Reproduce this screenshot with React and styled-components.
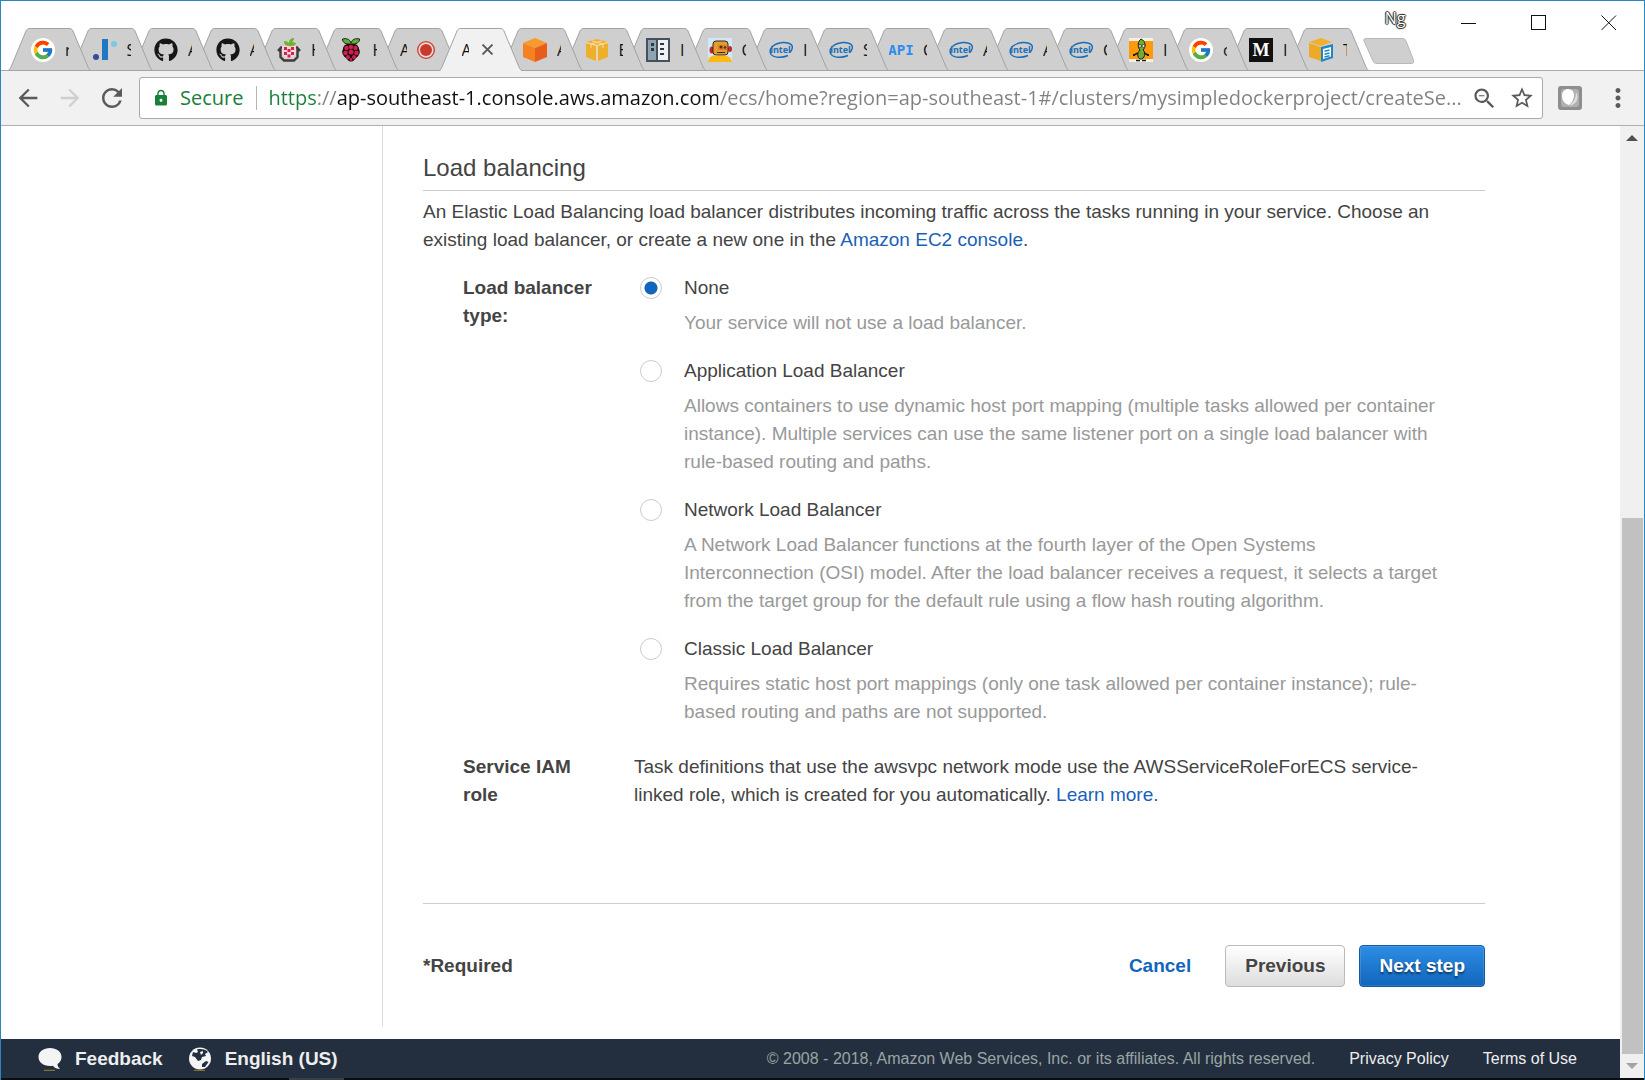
import React from "react";
import styled, { createGlobalStyle, css } from "styled-components";
import { FaGithub } from "react-icons/fa";
import { FcGoogle } from "react-icons/fc";
import {
  MdArrowBack,
  MdArrowForward,
  MdRefresh,
  MdLock,
  MdZoomOut,
  MdStarBorder,
  MdMoreVert,
} from "react-icons/md";

const uiFont = '"Open Sans", "Noto Sans", sans-serif';
const pageFont = '"Liberation Sans", Arial, sans-serif';

const GlobalStyle = createGlobalStyle`
  *, *::before, *::after { box-sizing: border-box; }
  body { margin: 0; background: #fff; font-family: ${pageFont}; }
  button { font: inherit; border: 0; padding: 0; background: none; cursor: pointer; }
  svg { display: block; }
`;

/* ---------- window ---------- */

const Window = styled.div`
  display: flex;
  flex-direction: column;
  min-height: 100vh;
  border: 1px solid #2a86c0;
  border-bottom: 0;
  background: #fff;
`;

const TitleBar = styled.header`
  display: flex;
  height: 70px;
  border-bottom: 1px solid #aaa;
`;

const TabStrip = styled.div`
  flex: 1 1 0;
  min-width: 0;
  display: flex;
  align-items: flex-end;
  padding-left: 7px;
`;

const TabGroup = styled.div`
  flex: none;
  display: flex;
  width: ${(p) => p.$width}px;
  height: 43px;
  margin-bottom: -1px;
`;

const TabButton = styled.button`
  position: relative;
  z-index: ${(p) => p.$z};
  flex: 1 1 0;
  min-width: 0;
  height: 43px;
  padding-left: 23px;
  display: flex;
  align-items: center;
  gap: 10px;
`;

const TabShape = styled.svg`
  position: absolute;
  left: 0;
  top: 0;
  z-index: -1;
`;

const TabTitle = styled.span`
  flex: none;
  width: ${(p) => (p.$first ? 7 : 4)}px;
  overflow: hidden;
  white-space: nowrap;
  text-align: left;
  font: 16px/24px ${uiFont};
  color: #111;
`;

const TabIcon = styled.span`
  flex: none;
  width: 24px;
  height: 24px;
`;

const NewTab = styled.button`
  flex: none;
  margin: 0 0 6px 17px;
`;

const WindowControls = styled.div`
  flex: none;
  display: flex;
  align-items: flex-start;
`;

const Profile = styled.button`
  width: 44px;
  height: 34px;
  margin-right: 17px;
  font: 16px/34px ${uiFont};
  color: #fff;
  text-shadow: 1px 0 1px #222, -1px 0 1px #222, 0 1px 1px #222, 0 -1px 1px #222;
`;

const ControlButton = styled.button`
  width: 70px;
  height: 43px;
  display: flex;
  align-items: center;
  justify-content: center;
`;

/* ---------- toolbar ---------- */

const Toolbar = styled.div`
  display: flex;
  align-items: center;
  height: 55px;
  padding: 0 5px 0 12px;
  background: #f1f1f1;
  border-bottom: 1px solid #b0b0b0;
`;

const ToolButton = styled.button`
  flex: none;
  display: flex;
  align-items: center;
  justify-content: center;
  width: ${(p) => p.$width || 30}px;
  height: 40px;
  color: ${(p) => (p.$dim ? "#cfcfcf" : "#5a5a5a")};
`;

const NavButtons = styled.nav`
  display: flex;
  gap: 12px;
  margin-right: 12px;
`;

const Omnibox = styled.div`
  flex: 1;
  min-width: 0;
  display: flex;
  align-items: center;
  height: 42px;
  padding: 0 2px 0 12px;
  border: 1px solid #a9a9a9;
  border-radius: 3px;
  background: #fff;
`;

const Secure = styled.span`
  display: flex;
  align-items: center;
  gap: 10px;
  padding-right: 13px;
  margin-right: 11px;
  border-right: 1px solid #b5b5b5;
  font: 20px/24px ${uiFont};
  color: #188038;
`;

const Address = styled.input`
  flex: 1;
  min-width: 0;
  height: 32px;
  padding: 0;
  border: 0;
  outline: 0;
  font: 20px/32px ${uiFont};
  color: transparent;
  text-overflow: ellipsis;
  background: linear-gradient(
    90deg,
    #188038 49px,
    #808080 49px 69px,
    #111 69px 450px,
    #808080 450px
  );
  background-clip: text;
  -webkit-background-clip: text;
`;

/* ---------- page ---------- */

const Viewport = styled.div`
  flex: 1;
  display: flex;
`;

const Page = styled.div`
  flex: 1;
  min-width: 0;
  display: flex;
  flex-direction: column;
`;

const Columns = styled.div`
  flex: 1;
  display: flex;
  padding-bottom: 12px;
`;

const Sidebar = styled.aside`
  flex: none;
  width: 382px;
  border-right: 1px solid #ddd;
`;

const Main = styled.main`
  flex: 1;
  min-width: 0;
  padding: 22px 135px 0 40px;
  font-size: 19px;
  line-height: 28px;
  color: #444;
`;

const Heading = styled.h2`
  margin: 0 0 7px;
  padding-bottom: 2px;
  border-bottom: 1px solid #ccc;
  font-size: 24px;
  line-height: 40px;
  font-weight: 400;
`;

const Intro = styled.p`
  margin: 0 0 20px;
`;

const Link = styled.a`
  color: #1a5fb8;
  text-decoration: none;
`;

const Field = styled.div`
  display: flex;
  padding: 0 32px 0 40px;
  margin-bottom: 27px;
`;

const FieldLabel = styled.div`
  flex: none;
  width: 171px;
  padding-right: 32px;
  font-weight: 700;
`;

const Options = styled.div`
  flex: 1;
  display: flex;
  flex-direction: column;
  gap: 20px;
  padding: 0 12px 0 6px;
`;

const Option = styled.div`
  display: grid;
  grid-template-columns: 22px 1fr;
  column-gap: 22px;
  row-gap: 7px;
  align-items: center;
`;

const Radio = styled.input`
  appearance: none;
  width: 22px;
  height: 22px;
  margin: 0;
  border: 1px solid #ccc;
  border-radius: 50%;
  background: #fff;
  &:checked {
    background: radial-gradient(circle, #1166bb 6px, #fff 7px);
  }
`;

const Hint = styled.p`
  grid-column: 2;
  margin: 0;
  color: #999;
`;

const Actions = styled.div`
  display: flex;
  align-items: center;
  gap: 14px;
  margin-top: 94px;
  padding: 41px 0 39px;
  border-top: 1px solid #ccc;
  font-weight: 700;
`;

const Required = styled.span`
  flex: 1;
`;

const CancelButton = styled.button`
  margin-right: 20px;
  color: #1166bb;
`;

const ActionButton = styled.button`
  height: 42px;
  padding: 0 19px;
  border: 1px solid #bbb;
  border-radius: 4px;
  color: #444;
  background: linear-gradient(#fff, #ddd);
  ${(p) =>
    p.$primary &&
    css`
      border-color: #1459a3;
      color: #fff;
      background: linear-gradient(#2e8de5, #1166bb);
      box-shadow: inset 0 0 0 1px rgba(255, 255, 255, 0.12);
      text-shadow: 0 2px 2px rgba(0, 0, 0, 0.5);
    `}
`;

/* ---------- console footer ---------- */

const Footer = styled.footer`
  display: flex;
  align-items: center;
  height: 39px;
  padding: 0 43px 0 37px;
  background: #232f3e;
  color: #eee;
`;

const FooterButton = styled.button`
  display: flex;
  align-items: center;
  gap: 13px;
  margin-right: 25px;
  font-size: 19px;
  line-height: 28px;
  font-weight: 700;
  color: #eee;
`;

const Legal = styled.div`
  display: flex;
  gap: 34px;
  margin-left: auto;
  font-size: 16px;
  line-height: 28px;
  color: #9aa5a5;
`;

const LegalLink = styled.a`
  color: #eee;
  text-decoration: none;
`;

const BottomEdge = styled.div`
  height: 2px;
  background: linear-gradient(90deg, #0a0e13 288px, #3a3f45 288px 343px, #0a0e13 343px);
`;

/* ---------- scroll bar ---------- */

const ScrollBar = styled.div`
  flex: none;
  width: 24px;
  display: flex;
  flex-direction: column;
  background: #f0f0f0;
`;

const ScrollArrow = styled.button`
  height: 24px;
  display: flex;
  align-items: center;
  justify-content: center;
`;

const ScrollSpace = styled.div`
  flex: 368;
`;

const ScrollThumb = styled.div`
  flex: 537;
  margin: 0 1px 0 2px;
  background: #c1c1c1;
`;

/* ---------- favicons ---------- */

const Icon = ({ children }) => (
  <svg width="24" height="24" viewBox="0 0 24 24" aria-hidden="true">
    {children}
  </svg>
);

const GoogleIcon = () => (
  <Icon>
    <circle cx="12" cy="12" r="12" fill="#fff" />
    <FcGoogle x="1" y="1" size={22} />
  </Icon>
);

const DotsIcon = () => (
  <Icon>
    <rect x="9" y="1" width="6" height="21" fill="#1f78c1" />
    <circle cx="3" cy="19" r="3" fill="#3a4a9a" />
    <circle cx="21" cy="6" r="3" fill="#7cc8e4" />
  </Icon>
);

const GitHubIcon = () => <FaGithub size={24} color="#161616" />;

const BerryHomeIcon = () => (
  <Icon>
    <path d="M1 13 L4 9.500 H20 L23 13 M3.500 11 V19 L7 22.500 H17 L20.500 19 V11" fill="none" stroke="#3c3c3c" strokeWidth="2.400" />
    <path d="M5 8 H19 V16 L15 20 H9 L5 16 Z" fill="#f4d3dc" />
    <path d="M7 9h3v3H7zM14 9h3v3h-3zM10.5 11h3v3h-3zM7 14h3v3H7zM14 14h3v3h-3zM10.5 16.500h3v3h-3z" fill="#cf2450" />
    <path d="M12 8 C7 8 7 4 7 3 C10 3 11 4 12 5 C12 2 14 0 17 0 C17 2 16 3 15 4 C18 4 19 5 19 6 C17 8 14 8.500 12 8 Z" fill="#6fb52c" />
  </Icon>
);

const RaspberryIcon = () => (
  <Icon>
    <path d="M12 6 C7 7 3 4 3.500 1 C7 0 11 1 12 5 C13 1 17 0 20.500 1 C21 4 17 7 12 6 Z" fill="#5fae3a" stroke="#17210f" />
    <path d="M12 6 C17 5 20 8 20 11 C22 14 20 18 17 20 C15 23 13 23.500 12 23.500 C11 23.500 9 23 7 20 C4 18 2 14 4 11 C4 8 7 5 12 6 Z" fill="#1c0a10" />
    <g fill="#cf1f4e">
      <circle cx="12" cy="9" r="2.200" />
      <circle cx="7.500" cy="10" r="2.200" />
      <circle cx="16.500" cy="10" r="2.200" />
      <circle cx="12" cy="14" r="2.500" />
      <circle cx="6.500" cy="15" r="2.300" />
      <circle cx="17.500" cy="15" r="2.300" />
      <circle cx="9" cy="19" r="2" />
      <circle cx="15" cy="19" r="2" />
      <circle cx="12" cy="21.500" r="1.400" />
    </g>
  </Icon>
);

const RecordIcon = () => (
  <svg width="18" height="18" viewBox="0 0 18 18" aria-hidden="true">
    <circle cx="9" cy="9" r="8.300" fill="#e7dcda" stroke="#c93a2c" strokeWidth="1.300" />
    <circle cx="9" cy="9" r="6" fill="#c93a2c" />
  </svg>
);

const CloseIcon = () => (
  <svg width="17" height="11" viewBox="-3 0 17 11" aria-hidden="true">
    <path d="M0.500 0.500 L10.500 10.500 M10.500 0.500 L0.500 10.500" stroke="#5a5a5a" strokeWidth="1.800" />
  </svg>
);

const OrangeCubeIcon = () => (
  <Icon>
    <path d="M12 0 L24 5 L12 10 L0 5 Z" fill="#fa9a2d" />
    <path d="M0 5 L12 10 V24 L0 19 Z" fill="#f58220" />
    <path d="M24 5 L12 10 V24 L24 19 Z" fill="#e85d1c" />
  </Icon>
);

const YellowBoxIcon = () => (
  <Icon>
    <path d="M1 4 L12 1 L23 4 L12 7 Z" fill="#f0b02c" />
    <path d="M1 5 L11 8 V23 L1 19 Z M23 5 L13 8 V23 L23 19 Z" fill="#eeb02b" />
    <path d="M1 4.500 L12 7.500 L23 4.500 M12 7.500 V23 M7 3 L18 6 V10 M17 3 L6 6 V10" fill="none" stroke="#f8dc9b" />
  </Icon>
);

const ServerIcon = () => (
  <Icon>
    <rect width="24" height="24" fill="#46515b" />
    <rect x="2" y="2" width="8" height="20" fill="#8fa4b3" />
    <rect x="12" y="2" width="10" height="20" fill="#eef2f4" />
    <path d="M5 5h3v3H5zM5 10h3v3H5zM14 5h4v2h-4zM14 10h4v2h-4zM14 15h4v2h-4z" fill="#2e3840" />
  </Icon>
);

const RobotIcon = () => (
  <Icon>
    <rect width="24" height="24" rx="1" fill="#cfe8f5" />
    <ellipse cx="4" cy="12" rx="2.500" ry="3.500" fill="#c3272b" />
    <ellipse cx="22" cy="11" rx="2" ry="3" fill="#c3272b" />
    <rect x="5" y="3" width="15" height="14" rx="3" fill="#e79a2d" stroke="#3a2a18" />
    <path d="M0 24 C1 17 6 17 12 18 C18 17 23 18 24 24 Z" fill="#fcb813" />
    <path d="M10 7h9v5h-9z" fill="#d5842c" />
    <circle cx="13" cy="9" r="1.500" fill="#5a2a18" />
    <circle cx="17" cy="9.500" r="1.200" fill="#5a2a18" />
    <path d="M9 14.500h8" stroke="#3a2a18" />
  </Icon>
);

const IntelIcon = () => (
  <Icon>
    <path
      d="M2 16 C-1 11 5 5 14 4.500 C21 4.200 24.500 7 23 11 C22.500 12.500 22 13.500 21 14.500 M1 14 C2 20 12 20.500 19 17.500"
      fill="none"
      stroke="#1a6db5"
      strokeWidth="1.400"
    />
    <text x="11.500" y="15" textAnchor="middle" fontFamily="Open Sans, sans-serif" fontSize="9" fontWeight="700" fill="#1a6db5">
      intel
    </text>
  </Icon>
);

const ApiIcon = () => (
  <Icon>
    <text x="12" y="17" textAnchor="middle" fontFamily="DejaVu Sans Mono, monospace" fontSize="14" fontWeight="700" fill="#2a8df0">
      API
    </text>
  </Icon>
);

const PeaIcon = () => (
  <Icon>
    <rect width="24" height="24" fill="#f6f1e6" />
    <rect y="3" width="24" height="18" fill="#ff9a0a" />
    <path d="M12 1 C17 3 17 9 14 12 C17 14 16 19 13 21 H11 C8 19 8 15 11 12 C8 9 9 3 12 1 Z" fill="#6fae34" stroke="#1b1b10" />
    <circle cx="11" cy="8" r="1.500" fill="#e8f0dc" stroke="#222" strokeWidth="0.700" />
    <circle cx="14.500" cy="8" r="1.500" fill="#e8f0dc" stroke="#222" strokeWidth="0.700" />
    <path d="M9 15 L5 17 M15 15 L19 17 M7 22.500 h4 M13 22.500 h4" stroke="#1b1b10" strokeWidth="1.500" />
    <path d="M4 17 h2 M18 17 h2" stroke="#1b1b10" strokeWidth="2" />
  </Icon>
);

const MediumIcon = () => (
  <Icon>
    <rect width="24" height="24" fill="#111" />
    <text x="12" y="18" textAnchor="middle" fontFamily="Liberation Serif, serif" fontSize="18" fontWeight="700" fill="#fff">
      M
    </text>
  </Icon>
);

const BoxDocIcon = () => (
  <Icon>
    <path d="M0 4 L12 0 L23 4 L12 8 Z" fill="#f0b02c" />
    <path d="M0 5 L12 9 V23 L0 19 Z" fill="#eda927" />
    <path d="M12 9 L24 6 V20 L12 24 Z" fill="#1e86c4" />
    <path d="M14 11 L22 9 V18.500 L14 21 Z" fill="#fff" />
    <path d="M15.500 13.300 L20.500 12 M15.500 16.300 L20.500 15 M15.500 19 L20.500 17.700" stroke="#1e86c4" strokeWidth="1.500" />
  </Icon>
);

const BubbleIcon = () => (
  <svg width="24" height="24" viewBox="0 0 24 24" aria-hidden="true">
    <path d="M12 1 C18.500 1 23.500 4.500 23.500 10 C23.500 13 22 15.500 19.500 17 C19.500 19 20.500 20.500 22 22 C19 22 16.500 21 15 18.800 C6 20 0.500 15.500 0.500 10 C0.500 4.500 5.500 1 12 1 Z" fill="#f4f4f4" />
    <path d="M6 23.300 h11" stroke="#a87a2c" />
  </svg>
);

const GlobeIcon = () => (
  <svg width="24" height="24" viewBox="0 0 24 24" aria-hidden="true">
    <circle cx="12" cy="11.500" r="11" fill="#f4f4f4" />
    <path d="M9 2.500 C13 1.500 18 2.500 20 5 L17 7 L18 9 L14 10 L13 13 L10 14 L7 10 L4 9 L5 5 L8 6 L10 5 Z M14 17 L18 14 L20.500 15 L17 20 L14 20 Z" fill="#232f3e" />
    <path d="M12 5 L15 4 L15 6 L13 8 Z" fill="#f4f4f4" />
    <path d="M6 23.300 h11" stroke="#a87a2c" />
  </svg>
);

/* ---------- data ---------- */

const wideTabs = [
  { title: "r", icon: GoogleIcon },
  { title: "S", icon: DotsIcon },
  { title: "A", icon: GitHubIcon },
  { title: "A", icon: GitHubIcon },
  { title: "H", icon: BerryHomeIcon },
  { title: "H", icon: RaspberryIcon },
  { title: "A", icon: RecordIcon, titleFirst: true },
  { title: "A", icon: CloseIcon, titleFirst: true, active: true },
  { title: "A", icon: OrangeCubeIcon },
  { title: "E", icon: YellowBoxIcon },
  { title: "I", icon: ServerIcon },
  { title: "C", icon: RobotIcon },
];

const narrowTabs = [
  { title: "I", icon: IntelIcon },
  { title: "S", icon: IntelIcon },
  { title: "C", icon: ApiIcon },
  { title: "A", icon: IntelIcon },
  { title: "A", icon: IntelIcon },
  { title: "C", icon: IntelIcon },
  { title: "I", icon: PeaIcon },
  { title: "c", icon: GoogleIcon },
  { title: "I", icon: MediumIcon },
  { title: "T", icon: BoxDocIcon },
];

const options = [
  {
    id: "none",
    name: "None",
    hint: "Your service will not use a load balancer.",
  },
  {
    id: "application",
    name: "Application Load Balancer",
    hint: "Allows containers to use dynamic host port mapping (multiple tasks allowed per container instance). Multiple services can use the same listener port on a single load balancer with rule-based routing and paths.",
  },
  {
    id: "network",
    name: "Network Load Balancer",
    hint: "A Network Load Balancer functions at the fourth layer of the Open Systems Interconnection (OSI) model. After the load balancer receives a request, it selects a target from the target group for the default rule using a flow hash routing algorithm.",
  },
  {
    id: "classic",
    name: "Classic Load Balancer",
    hint: "Requires static host port mappings (only one task allowed per container instance); rule-based routing and paths are not supported.",
  },
];

function Tab({ tab, z }) {
  const Favicon = tab.icon;
  const title = <TabTitle $first={tab.titleFirst}>{tab.title}</TabTitle>;
  return (
    <TabButton role="tab" aria-selected={!!tab.active} $z={tab.active ? 50 : z}>
      <TabShape width="84" height="43" viewBox="0 0 84 43" aria-hidden="true">
        <path
          d="M0 42.500 C1.500 42 2 41 3 39 L18 3 C19 1 20 0.500 22 0.500 H61 C63 0.500 64 1 65 3 L80 39 C81 41 81.500 42 83 42.500"
          fill={tab.active ? "#f1f1f1" : "#cfcfcf"}
          stroke="#a3a3a3"
        />
        {tab.active && <path d="M2 42.500 H82" stroke="#f1f1f1" />}
        {!tab.active && <path d="M0 42.500 H84" stroke="#a3a3a3" />}
      </TabShape>
      {tab.titleFirst ? (
        <>
          {title}
          <Favicon />
        </>
      ) : (
        <>
          <TabIcon>
            <Favicon />
          </TabIcon>
          {title}
        </>
      )}
    </TabButton>
  );
}

export default function App() {
  return (
    <>
      <GlobalStyle />
      <Window>
        <TitleBar>
          <TabStrip role="tablist">
            <TabGroup $width={738}>
              {wideTabs.map((tab, i) => (
                <Tab key={i} tab={tab} z={40 - i} />
              ))}
            </TabGroup>
            <TabGroup $width={600}>
              {narrowTabs.map((tab, i) => (
                <Tab key={i} tab={tab} z={20 - i} />
              ))}
            </TabGroup>
            <NewTab aria-label="New tab">
              <svg width="52" height="26" viewBox="0 0 52 26" aria-hidden="true">
                <path d="M3 0.500 H40 Q42 0.500 43 3 L50.500 22 Q51.500 25 49 25.500 H14 Q11 25.500 10 23 L1 3 Q0 0.500 3 0.500 Z" fill="#cfcfcf" stroke="#b8b8b8" />
              </svg>
            </NewTab>
          </TabStrip>
          <WindowControls>
            <Profile>Ng</Profile>
            <ControlButton aria-label="Minimize">
              <svg width="16" height="16" viewBox="0 0 16 16">
                <path d="M0 8.500 H15" stroke="#111" />
              </svg>
            </ControlButton>
            <ControlButton aria-label="Maximize">
              <svg width="16" height="16" viewBox="0 0 16 16">
                <rect x="0.500" y="0.500" width="14" height="14" fill="none" stroke="#111" />
              </svg>
            </ControlButton>
            <ControlButton aria-label="Close">
              <svg width="16" height="16" viewBox="0 0 16 16">
                <path d="M0.500 0.500 L15 15 M15 0.500 L0.500 15" stroke="#111" />
              </svg>
            </ControlButton>
          </WindowControls>
        </TitleBar>

        <Toolbar>
          <NavButtons>
            <ToolButton aria-label="Back">
              <MdArrowBack size={28} />
            </ToolButton>
            <ToolButton aria-label="Forward" $dim>
              <MdArrowForward size={28} />
            </ToolButton>
            <ToolButton aria-label="Reload">
              <MdRefresh size={30} />
            </ToolButton>
          </NavButtons>
          <Omnibox>
            <Secure>
              <MdLock size={18} />
              Secure
            </Secure>
            <Address
              aria-label="Address"
              defaultValue="https://ap-southeast-1.console.aws.amazon.com/ecs/home?region=ap-southeast-1#/clusters/mysimpledockerproject/createSe..."
            />
            <ToolButton aria-label="Zoom" $width={37}>
              <MdZoomOut size={27} />
            </ToolButton>
            <ToolButton aria-label="Bookmark" $width={37}>
              <MdStarBorder size={26} />
            </ToolButton>
          </Omnibox>
          <ToolButton aria-label="Extension" $width={54}>
            <svg width="24" height="24" viewBox="0 0 24 24">
              <rect width="24" height="24" rx="3" fill="#8e8e8e" />
              <rect x="3" y="3" width="18" height="18" rx="3" fill="#b0b0b0" />
              <path d="M9 3 C13 3 16 5 16 9 C16 13 14 17 11 19 C7 18 4 15 4 10 C4 6 6 4 9 3 Z" fill="#fff" />
              <path d="M18 6 C22 12 18 19 11 20 C15 17 18 13 18 6 Z" fill="#dedede" />
            </svg>
          </ToolButton>
          <ToolButton aria-label="Menu" $width={42}>
            <MdMoreVert size={30} />
          </ToolButton>
        </Toolbar>

        <Viewport>
          <Page>
            <Columns>
              <Sidebar />
              <Main>
                <Heading>Load balancing</Heading>
                <Intro>
                  An Elastic Load Balancing load balancer distributes incoming traffic across the
                  tasks running in your service. Choose an existing load balancer, or create a new
                  one in the <Link href="#ec2">Amazon EC2 console</Link>.
                </Intro>
                <Field role="radiogroup" aria-labelledby="lb-type">
                  <FieldLabel id="lb-type">Load balancer type:</FieldLabel>
                  <Options>
                    {options.map((o) => (
                      <Option key={o.id}>
                        <Radio
                          type="radio"
                          name="lb"
                          id={o.id}
                          defaultChecked={o.id === "none"}
                          aria-describedby={`${o.id}-hint`}
                        />
                        <label htmlFor={o.id}>{o.name}</label>
                        <Hint id={`${o.id}-hint`}>{o.hint}</Hint>
                      </Option>
                    ))}
                  </Options>
                </Field>
                <Field>
                  <FieldLabel>Service IAM role</FieldLabel>
                  <div>
                    Task definitions that use the awsvpc network mode use the AWSServiceRoleForECS
                    service-linked role, which is created for you automatically.{" "}
                    <Link href="#learn">Learn more.</Link>
                  </div>
                </Field>
                <Actions>
                  <Required>*Required</Required>
                  <CancelButton>Cancel</CancelButton>
                  <ActionButton>Previous</ActionButton>
                  <ActionButton $primary>Next step</ActionButton>
                </Actions>
              </Main>
            </Columns>
            <Footer>
              <FooterButton>
                <BubbleIcon />
                Feedback
              </FooterButton>
              <FooterButton>
                <GlobeIcon />
                English (US)
              </FooterButton>
              <Legal>
                <span>© 2008 - 2018, Amazon Web Services, Inc. or its affiliates. All rights reserved.</span>
                <LegalLink href="#privacy">Privacy Policy</LegalLink>
                <LegalLink href="#terms">Terms of Use</LegalLink>
              </Legal>
            </Footer>
          </Page>
          <ScrollBar>
            <ScrollArrow aria-label="Scroll up">
              <svg width="12" height="6" viewBox="0 0 12 6">
                <path d="M6 0 L12 6 H0 Z" fill="#505050" />
              </svg>
            </ScrollArrow>
            <ScrollSpace />
            <ScrollThumb />
            <ScrollArrow aria-label="Scroll down">
              <svg width="12" height="6" viewBox="0 0 12 6">
                <path d="M6 6 L12 0 H0 Z" fill="#a3a3a3" />
              </svg>
            </ScrollArrow>
          </ScrollBar>
        </Viewport>
        <BottomEdge />
      </Window>
    </>
  );
}
